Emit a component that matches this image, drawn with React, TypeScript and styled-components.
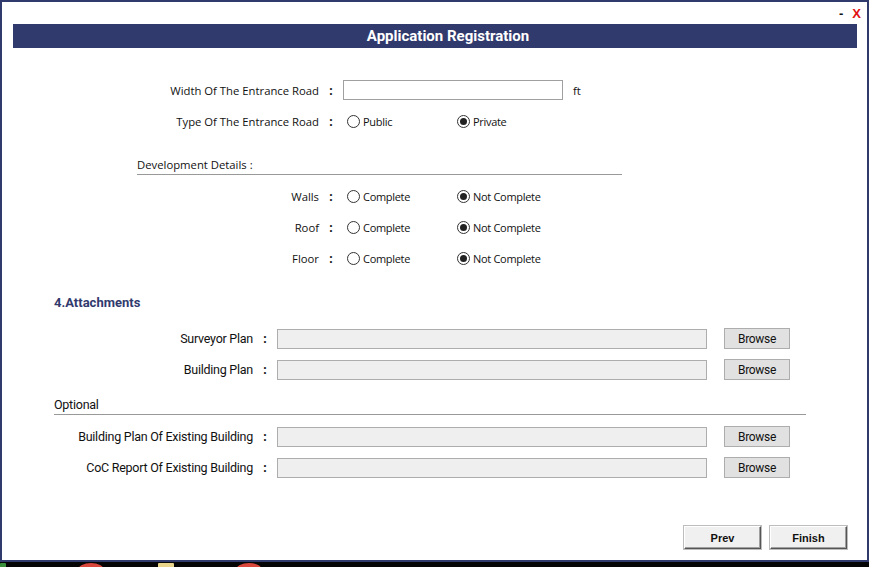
import React from 'react';
import styled, { createGlobalStyle } from 'styled-components';

const NAVY = '#313a6d';

const GlobalStyle = createGlobalStyle`
  html, body {
    margin: 0;
    padding: 0;
    background: #000;
  }
  body {
    font-family: "Open Sans", "Noto Sans", sans-serif;
    color: #111;
  }
`;

const Screen = styled.div`
  width: 869px;
  height: 567px;
  display: flex;
  flex-direction: column;
  overflow: hidden;
`;

const Window = styled.div`
  height: 558px;
  border: 2px solid ${NAVY};
  background: #fff;
  display: flex;
  flex-direction: column;
`;

const TitleControls = styled.div`
  height: 22px;
  display: flex;
  justify-content: flex-end;
  align-items: center;
  gap: 9px;
  padding-right: 6px;
  font-family: "Liberation Sans", Arial, sans-serif;
  font-weight: bold;
  font-size: 13px;
`;

const ControlButton = styled.span<{ $danger?: boolean }>`
  color: ${(p) => (p.$danger ? '#e01010' : '#111')};
  line-height: 1;
`;

const Header = styled.div`
  margin: 0 10px 0 11px;
  padding-left: 26px;
  height: 24px;
  background: ${NAVY};
  color: #fff;
  display: flex;
  align-items: center;
  justify-content: center;
  font-family: Roboto, "Open Sans", sans-serif;
  font-weight: bold;
  font-size: 15px;
`;

const FormBlock = styled.div`
  margin: 32px 0 0 133px;
  width: 487px;
  display: flex;
  flex-direction: column;
  gap: 11px;
`;

const Row = styled.div<{ $labelWidth: number }>`
  display: grid;
  grid-template-columns: ${(p) => p.$labelWidth}px 24px auto;
  align-items: center;
  height: 20px;
`;

const Label = styled.span<{ $condensed?: boolean }>`
  text-align: right;
  font-size: 11.3px;
  white-space: nowrap;
  ${(p) =>
    p.$condensed &&
    `font-family: Roboto, sans-serif; letter-spacing: -0.25px; font-size: 12.5px;`}
`;

const Colon = styled.span`
  text-align: center;
  font-size: 12px;
  font-weight: bold;
`;

const Field = styled.div`
  display: flex;
  align-items: center;
  gap: 10px;
`;

const TextBox = styled.div<{ $width: number; $disabled?: boolean }>`
  width: ${(p) => p.$width}px;
  height: 18px;
  border: 1px solid ${(p) => (p.$disabled ? '#adadad' : '#a0a0a0')};
  background: ${(p) => (p.$disabled ? '#efefef' : '#fff')};
`;

const Unit = styled.span`
  font-size: 11.3px;
`;

const RadioGroup = styled.div`
  display: grid;
  grid-template-columns: 110px auto;
  align-items: center;
  padding-left: 4px;
`;

const RadioOption = styled.label`
  display: flex;
  align-items: center;
  gap: 3px;
  font-size: 11px;
  letter-spacing: -0.3px;
`;

const RadioCircle = styled.span<{ $checked?: boolean }>`
  width: 11px;
  height: 11px;
  border: 1px solid #333;
  border-radius: 50%;
  display: flex;
  align-items: center;
  justify-content: center;
  &::after {
    content: '';
    display: ${(p) => (p.$checked ? 'block' : 'none')};
    width: 7px;
    height: 7px;
    border-radius: 50%;
    background: #222;
  }
`;

const SubHeading = styled.div<{ $condensed?: boolean; $top: number; $indent?: number }>`
  margin-top: ${(p) => p.$top}px;
  margin-left: ${(p) => p.$indent ?? 0}px;
  padding-bottom: 2px;
  line-height: 15px;
  border-bottom: 1px solid #999;
  font-size: 11.3px;
  ${(p) =>
    p.$condensed &&
    `font-family: Roboto, sans-serif; letter-spacing: -0.25px; font-size: 12.5px;`}
`;

const SectionTitle = styled.div`
  margin: 27px 0 0 52px;
  color: ${NAVY};
  font-family: Roboto, sans-serif;
  font-weight: bold;
  font-size: 13px;
`;

const AttachBlock = styled.div`
  margin: 18px 0 0 51px;
  width: 753px;
  display: flex;
  flex-direction: column;
  gap: 11px;
`;

const BrowseButton = styled.button`
  margin-left: 7px;
  width: 66px;
  height: 21px;
  border: 1px solid #adadad;
  background: #e1e1e1;
  font-family: Roboto, sans-serif;
  font-size: 12px;
  letter-spacing: -0.3px;
  color: #111;
  padding: 0;
`;

const Footer = styled.div`
  margin-top: auto;
  margin-bottom: 11px;
  padding-right: 20px;
  display: flex;
  justify-content: flex-end;
  gap: 9px;
`;

const NavButton = styled.button`
  width: 77px;
  height: 23px;
  background: #f0f0f0;
  border: 1px solid;
  border-color: #fff #555 #555 #fff;
  box-shadow: inset -1px -1px 0 #a0a0a0, 0 0 0 1px #bdbdbd;
  font-family: "Liberation Sans", Arial, sans-serif;
  font-weight: bold;
  font-size: 11px;
  color: #111;
`;

const Taskbar = styled.div`
  flex: 1;
  background: #050505;
  display: flex;
  align-items: flex-start;
  overflow: hidden;
`;

const TaskIcon = styled.span<{ $color: string; $round?: boolean; $left: number; $width: number }>`
  margin-left: ${(p) => p.$left}px;
  width: ${(p) => p.$width}px;
  height: 14px;
  margin-top: 1px;
  background: ${(p) => p.$color};
  border-radius: ${(p) => (p.$round ? '50%' : '1px')};
`;

type RadioRow = { label: string; options: string[]; selected: number };

const developmentRows: RadioRow[] = [
  { label: 'Walls', options: ['Complete', 'Not Complete'], selected: 1 },
  { label: 'Roof', options: ['Complete', 'Not Complete'], selected: 1 },
  { label: 'Floor', options: ['Complete', 'Not Complete'], selected: 1 },
];

const RadioField: React.FC<{ row: RadioRow }> = ({ row }) => (
  <RadioGroup>
    {row.options.map((opt, i) => (
      <RadioOption key={opt}>
        <RadioCircle $checked={i === row.selected} />
        {opt}
      </RadioOption>
    ))}
  </RadioGroup>
);

const AttachRow: React.FC<{ label: string }> = ({ label }) => (
  <Row $labelWidth={200}>
    <Label $condensed>{label}</Label>
    <Colon>:</Colon>
    <Field>
      <TextBox $width={428} $disabled />
      <BrowseButton>Browse</BrowseButton>
    </Field>
  </Row>
);

const App: React.FC = () => (
  <Screen>
    <GlobalStyle />
    <Window>
      <TitleControls>
        <ControlButton>-</ControlButton>
        <ControlButton $danger>X</ControlButton>
      </TitleControls>
      <Header>Application Registration</Header>

      <FormBlock>
        <Row $labelWidth={184}>
          <Label>Width Of The Entrance Road</Label>
          <Colon>:</Colon>
          <Field>
            <TextBox $width={218} />
            <Unit>ft</Unit>
          </Field>
        </Row>
        <Row $labelWidth={184}>
          <Label>Type Of The Entrance Road</Label>
          <Colon>:</Colon>
          <RadioField row={{ label: '', options: ['Public', 'Private'], selected: 1 }} />
        </Row>
        <SubHeading $top={15} $indent={2}>Development Details :</SubHeading>
        {developmentRows.map((row) => (
          <Row key={row.label} $labelWidth={184}>
            <Label>{row.label}</Label>
            <Colon>:</Colon>
            <RadioField row={row} />
          </Row>
        ))}
      </FormBlock>

      <SectionTitle>4.Attachments</SectionTitle>
      <AttachBlock>
        <AttachRow label="Surveyor Plan" />
        <AttachRow label="Building Plan" />
        <SubHeading $condensed $top={7} $indent={1}>Optional</SubHeading>
        <AttachRow label="Building Plan Of Existing Building" />
        <AttachRow label="CoC Report Of Existing Building" />
      </AttachBlock>

      <Footer>
        <NavButton>Prev</NavButton>
        <NavButton>Finish</NavButton>
      </Footer>
    </Window>
    <Taskbar>
      <TaskIcon $color="#3a8f3a" $left={0} $width={6} />
      <TaskIcon $color="#d9463b" $round $left={72} $width={26} />
      <TaskIcon $color="#e8d48a" $left={54} $width={16} />
      <TaskIcon $color="#d9463b" $round $left={62} $width={26} />
    </Taskbar>
  </Screen>
);

export default App;
